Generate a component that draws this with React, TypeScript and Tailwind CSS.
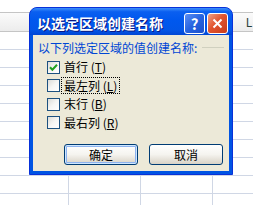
import React from 'react';

const options = [
  { label: '首行', key: 'T', checked: true, focus: false },
  { label: '最左列', key: 'L', checked: false, focus: true },
  { label: '末行', key: 'B', checked: false, focus: false },
  { label: '最右列', key: 'R', checked: false, focus: false },
];

function SheetRow({ header }: { header?: boolean }) {
  return (
    <div
      className={
        header
          ? 'flex h-[19px] shrink-0 border-b border-[#c5c5c5] bg-gradient-to-b from-[#fbfbfb] to-[#ececec]'
          : 'flex h-[18px] shrink-0 border-b border-[#d0d7e5]'
      }
    >
      <div className="w-[69px] shrink-0 border-r border-[#d0d7e5]" />
      <div className="w-[72px] shrink-0 border-r border-[#d0d7e5]" />
      <div className="w-[72px] shrink-0 border-r border-[#d0d7e5]" />
      <div className="flex w-[72px] shrink-0 items-center justify-center text-[12px] leading-none text-[#27413a]">
        {header ? 'L' : ''}
      </div>
    </div>
  );
}

function Checkbox({ checked }: { checked: boolean }) {
  return (
    <div className="flex h-[13px] w-[13px] shrink-0 items-center justify-center border border-[#1c5180] bg-gradient-to-br from-[#dcdcd7] via-[#f6f6f4] to-white">
      {checked && (
        <svg width="9" height="9" viewBox="0 0 9 9">
          <path d="M1 4.2 L3.4 6.8 L8 1.8" fill="none" stroke="#21a121" strokeWidth="2" />
        </svg>
      )}
    </div>
  );
}

function XpButton({ label, isDefault }: { label: string; isDefault?: boolean }) {
  return (
    <button
      className={
        'flex h-[21px] w-[74px] items-center justify-center rounded-[3px] border border-[#003c74] bg-gradient-to-b from-white via-[#f5f4ef] to-[#d8d2c6] text-[12px] leading-none text-black ' +
        (isDefault ? 'shadow-[inset_0_0_0_1px_#cee7ff,inset_0_0_0_2px_#8db2ee]' : '')
      }
    >
      {label}
    </button>
  );
}

export default function App() {
  return (
    <div className="relative h-[205px] w-[253px] overflow-hidden bg-white font-['Noto_Sans_CJK_SC','Noto_Sans',sans-serif]">
      {/* worksheet behind the dialog */}
      <div className="flex h-full flex-col">
        <div className="h-[13px] shrink-0 border-b border-[#c5c5c5]" />
        <SheetRow header />
        {Array.from({ length: 10 }).map((_, i) => (
          <SheetRow key={i} />
        ))}
      </div>

      {/* dialog */}
      <div className="absolute left-[29px] top-[7px] flex h-[168px] w-[204px] flex-col rounded-t-[8px] border border-[#0831d9] bg-[#0054e3]">
        {/* title bar */}
        <div className="flex h-[27px] shrink-0 items-start rounded-t-[7px] bg-[linear-gradient(to_bottom,#3d8ffa_0%,#0a5ff0_14%,#0058ee_45%,#0256e8_80%,#0046d4_100%)] pl-[7px] pr-[4px] pt-[5px]">
          <div className="h-[21px] flex-1 text-[14px] font-bold leading-[21px] text-white [text-shadow:1px_1px_0_#0a1883]">
            以选定区域创建名称
          </div>
          <div className="flex gap-[2px]">
            <div className="flex h-[21px] w-[21px] items-center justify-center rounded-[3px] border border-white bg-[linear-gradient(135deg,#5a8ef5_0%,#2663e0_50%,#1c4fcb_100%)] text-[15px] font-bold leading-none text-white">
              ?
            </div>
            <div className="flex h-[21px] w-[21px] items-center justify-center rounded-[3px] border border-white bg-[linear-gradient(135deg,#f0a286_0%,#e2552f_45%,#c63b1c_100%)]">
              <svg width="11" height="11" viewBox="0 0 11 11">
                <path d="M1.5 1.5 L9.5 9.5 M9.5 1.5 L1.5 9.5" stroke="white" strokeWidth="2" />
              </svg>
            </div>
          </div>
        </div>

        {/* client area */}
        <div className="mx-[3px] mb-[3px] flex flex-1 flex-col bg-[#ece9d8]">
          <div className="mt-[6px] flex h-[13px] items-center pl-[5px] pr-[5px]">
            <span className="text-[12px] leading-[13px] text-[#0046d5]">以下列选定区域的值创建名称:</span>
            <div className="ml-[5px] h-px flex-1 bg-[#d0d0bf]" />
          </div>

          <div className="mt-[4px] flex flex-col pl-[14px]">
            {options.map((o) => (
              <div key={o.key} className="flex h-[18.5px] items-center">
                <Checkbox checked={o.checked} />
                <div
                  className={
                    'ml-[2px] flex h-[15px] items-center px-[2px] text-[12px] leading-none text-black ' +
                    (o.focus ? 'outline outline-1 outline-dotted outline-black' : 'outline outline-1 outline-transparent')
                  }
                >
                  {o.label}&nbsp;(<span className="underline">{o.key}</span>)
                </div>
              </div>
            ))}
          </div>

          <div className="mt-auto flex justify-end gap-[11px] pb-[6px] pr-[6px]">
            <XpButton label="确定" isDefault />
            <XpButton label="取消" />
          </div>
        </div>
      </div>
    </div>
  );
}
